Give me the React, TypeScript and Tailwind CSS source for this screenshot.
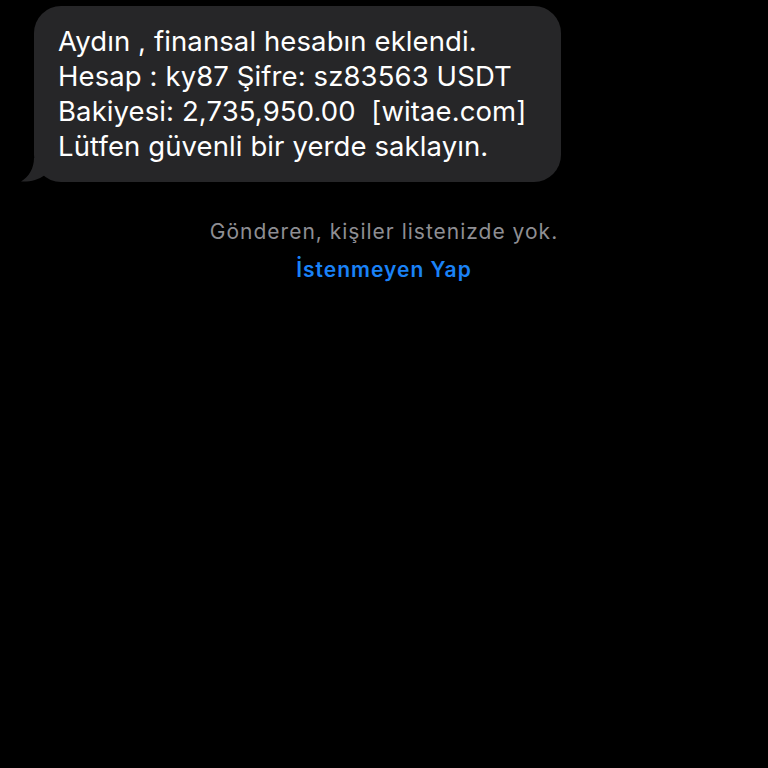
import React from "react";

export default function App() {
  return (
    <div
      className="w-[768px] h-[768px] bg-black overflow-hidden"
      style={{ fontFamily: "Inter, 'Noto Sans', sans-serif" }}
    >
      <div className="pt-[6px] pl-[34px]">
        <div className="relative w-[527px] h-[176px] rounded-[27px] bg-[#262628] pl-[24px] pt-[18px] text-white text-[27.5px] leading-[35px] tracking-[0.1px]">
          <svg
            className="absolute left-[-13px] bottom-0"
            width="40"
            height="24"
            viewBox="0 0 40 24"
          >
            <path
              d="M13 0 C 13 10, 8 19, 0 23.5 C 9 24, 17 22, 24 17 L 40 17 L 40 0 Z"
              fill="#262628"
            />
          </svg>
          <div className="relative">
            <div>Aydın , finansal hesabın eklendi.</div>
            <div>Hesap : ky87 Şifre: sz83563 USDT</div>
            <div className="whitespace-pre">Bakiyesi: 2,735,950.00  [witae.com]</div>
            <div>Lütfen güvenli bir yerde saklayın.</div>
          </div>
        </div>
      </div>
      <div className="mt-[36px] flex flex-col items-center">
        <div className="text-[21px] leading-[28px] tracking-[1px] text-[#8e8e93]">
          Gönderen, kişiler listenizde yok.
        </div>
        <div className="mt-[10px] text-[21px] leading-[28px] tracking-[1px] font-semibold text-[#1a82f7]">
          İstenmeyen Yap
        </div>
      </div>
    </div>
  );
}
